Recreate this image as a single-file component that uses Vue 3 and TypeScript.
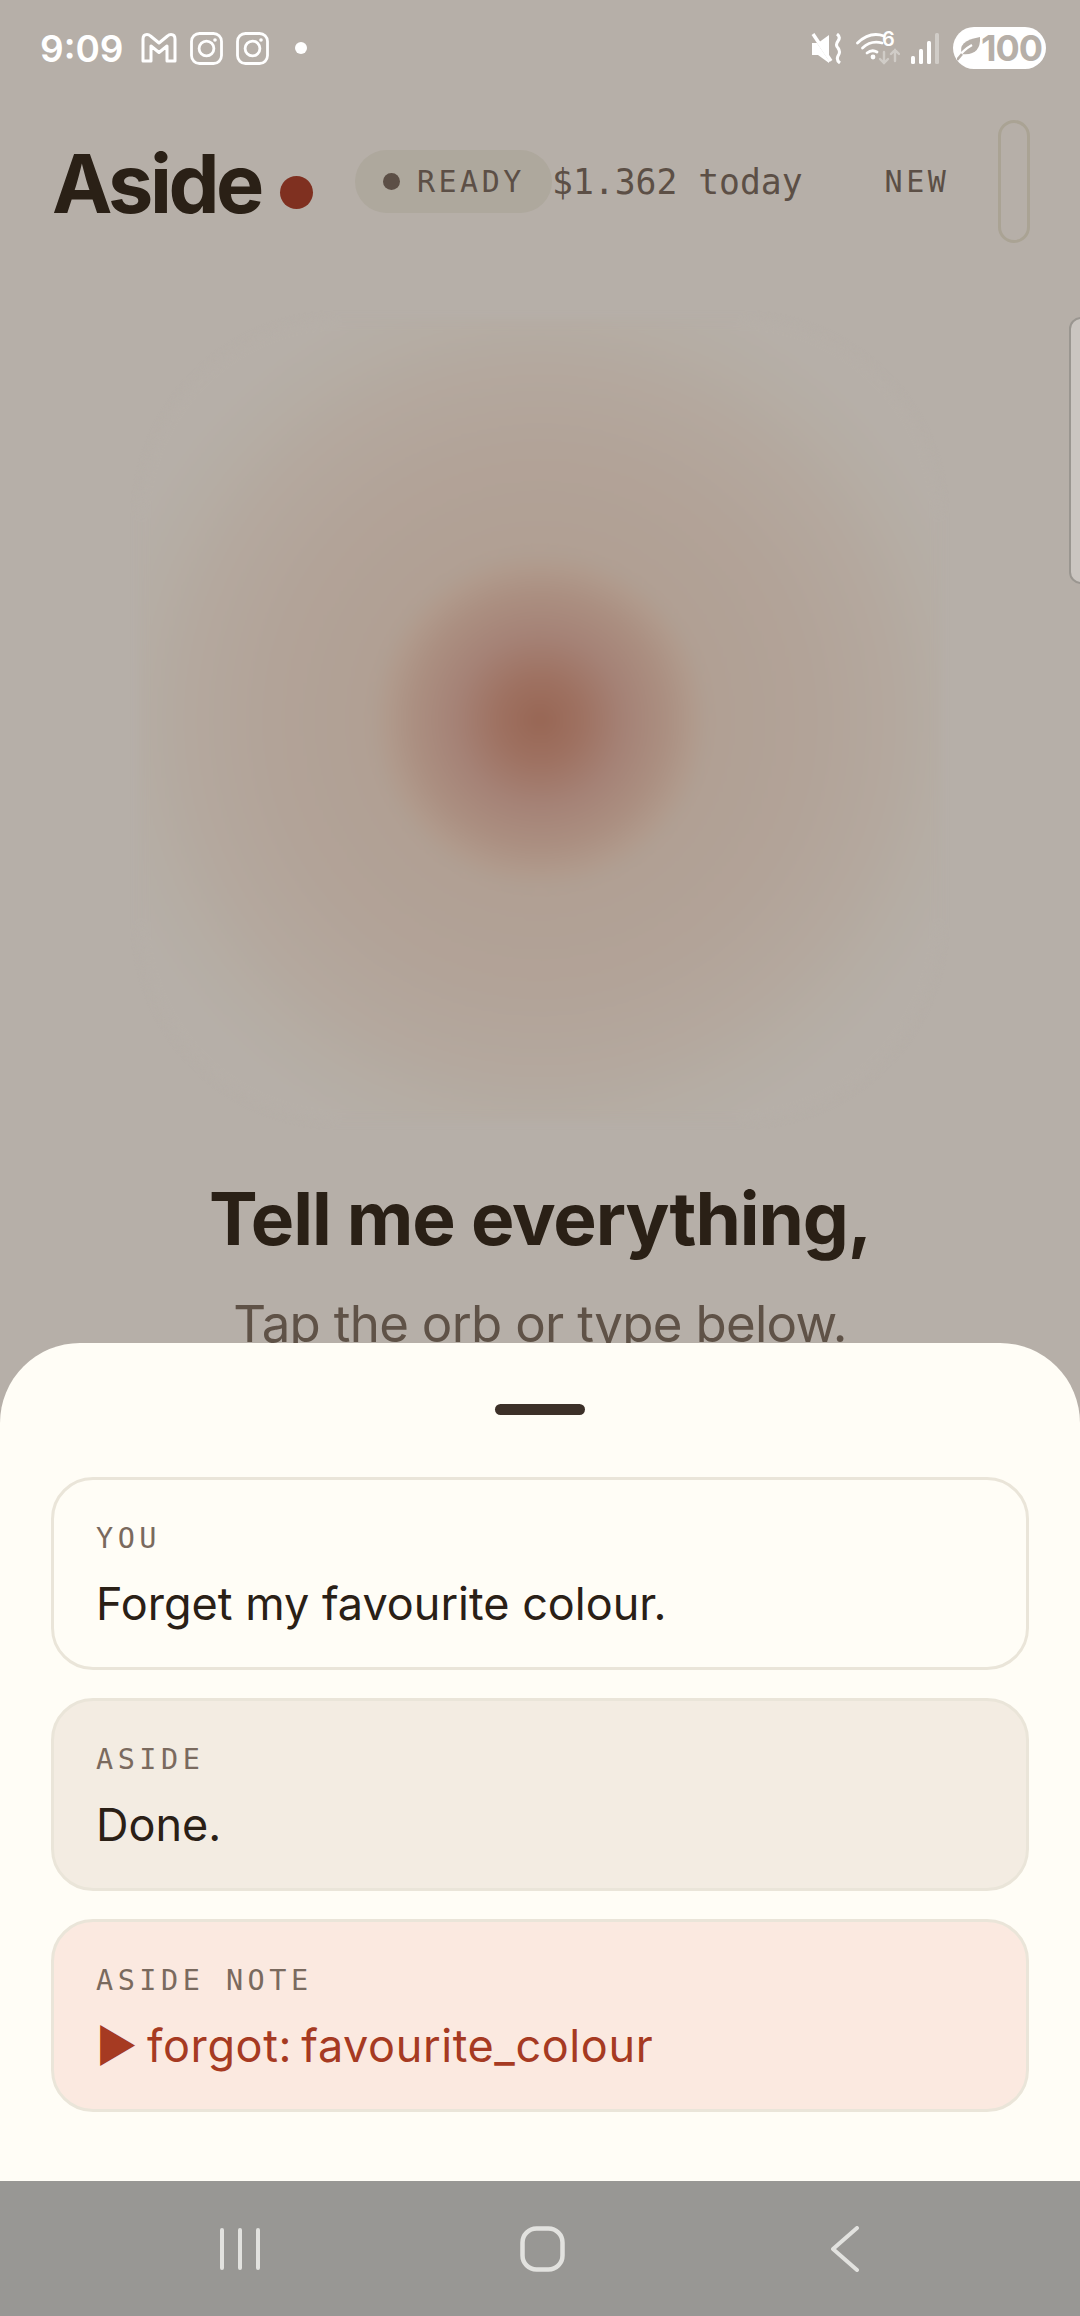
<template>
  <div class="phone">
    <div class="backdrop">
      <div class="status-bar">
        <span class="time">9:09</span>
        <svg class="ic-mail" width="36" height="30" viewBox="0 0 36 30" fill="none" stroke="#fff" stroke-width="3" stroke-linejoin="round">
          <path d="M2 6 Q2 1.5 6 1.5 Q8 1.5 9.5 3 L18 10 L26.5 3 Q28 1.5 30 1.5 Q34 1.5 34 6 V28 H26 V13 L18 19.5 L10 13 V28 H2 Z" />
        </svg>
        <svg v-for="n in 2" :key="n" class="ic-insta" width="33" height="33" viewBox="0 0 33 33" fill="none" stroke="#fff" stroke-width="2.8">
          <rect x="1.5" y="1.5" width="30" height="30" rx="8" />
          <circle cx="16.5" cy="16.5" r="7.4" />
          <circle cx="25" cy="8" r="1.8" fill="#fff" stroke="none" />
        </svg>
        <span class="note-dot"></span>
        <div class="status-right">
          <svg class="ic-mute" width="31" height="31" viewBox="0 0 31 31" fill="none">
            <path d="M1 10 H7 L18 2 V30 L7 22 H1 Z" fill="#fff" />
            <path d="M3.5 4 L21 30" stroke="#b6afa8" stroke-width="2.4" />
            <path d="M2 1 L20 28" stroke="#fff" stroke-width="3.4" />
            <path d="M26 1 Q30 4 27 8 Q24 12 27 15 Q30 19 27 23 Q25 27 29 30" stroke="#fff" stroke-width="3" />
          </svg>
          <svg class="ic-wifi" width="44" height="33" viewBox="0 0 44 33" fill="none" stroke-linecap="round">
            <path d="M1.5 11 Q14 -1 28 4" stroke="#fff" stroke-width="2.8" />
            <path d="M6.5 16 Q15 8 26 11" stroke="#fff" stroke-width="2.8" />
            <path d="M11 21 Q16 17 21 20" stroke="#fff" stroke-width="2.8" />
            <circle cx="17" cy="25" r="2.4" fill="#fff" />
            <path d="M28 20 V31 M24 27 L28 31 L32 27" stroke="#d0ccc7" stroke-width="2.4" />
            <path d="M39 29 V18 M35 22 L39 18 L43 22" stroke="#d0ccc7" stroke-width="2.4" />
          </svg>
          <span class="wifi-six">6</span>
          <svg class="ic-signal" width="28" height="31" viewBox="0 0 28 31" fill="#fff">
            <rect x="0" y="23" width="4" height="8" rx="1.5" />
            <rect x="8" y="16" width="4" height="15" rx="1.5" />
            <rect x="16" y="8" width="4" height="23" rx="1.5" />
            <rect x="24" y="0" width="4" height="31" rx="1.5" fill="#d0ccc7" />
          </svg>
          <div class="battery">
            <svg width="24" height="26" viewBox="0 0 24 26" fill="none">
              <path d="M5 19 Q0 6 23 2 Q24 21 5 19 Z" fill="#b6afa8" />
              <path d="M0 24 Q6 15 15 10" stroke="#fff" stroke-width="2.4" />
              <path d="M0 25 L5 19" stroke="#b6afa8" stroke-width="2.6" />
            </svg>
            <span>100</span>
          </div>
        </div>
      </div>

      <header class="top-row">
        <h1 class="logo">Aside</h1>
        <span class="logo-dot"></span>
        <div class="pill">
          <span class="pill-dot"></span>
          <span class="mono-label">READY</span>
        </div>
        <span class="cost">$1.362 today</span>
        <span class="mono-label new">NEW</span>
        <span class="capsule"></span>
      </header>

      <div class="orb">
        <div class="orb-core"></div>
      </div>

      <h2 class="headline">Tell me everything,</h2>
      <p class="subline">Tap the orb or type below.</p>
    </div>

    <section class="sheet">
      <div class="handle"></div>
      <div class="card-list">
        <article v-for="card in cards" :key="card.label" class="card" :class="card.kind">
          <div class="card-label">{{ card.label }}</div>
          <div class="card-text">{{ card.text }}</div>
        </article>
      </div>
    </section>

    <nav class="nav-bar">
      <svg width="40" height="44" viewBox="0 0 40 44" stroke="#e2e2df" stroke-width="4" stroke-linecap="round" fill="none">
        <path d="M2 3 V41 M20 3 V41 M38 3 V41" />
      </svg>
      <svg width="45" height="46" viewBox="0 0 45 46" stroke="#e2e2df" stroke-width="4.5" fill="none">
        <rect x="2.5" y="2.5" width="40" height="41" rx="14" />
      </svg>
      <svg width="28" height="46" viewBox="0 0 28 46" stroke="#e2e2df" stroke-width="4" stroke-linecap="round" stroke-linejoin="round" fill="none">
        <path d="M26 2 L2 23 L26 44" />
      </svg>
    </nav>

    <!-- peek of the side panel, sits over the page edge -->
    <div class="side-tab"></div>
  </div>
</template>

<script setup lang="ts">
const cards = [
  { label: "YOU", text: "Forget my favourite colour.", kind: "you" },
  { label: "ASIDE", text: "Done.", kind: "reply" },
  { label: "ASIDE NOTE", text: "▶ forgot: favourite_colour", kind: "note" },
]
</script>

<style>
html,
body {
  margin: 0;
  background: #b6afa8;
}
</style>

<style scoped>
.phone {
  position: relative;
  width: 1080px;
  height: 2316px;
  display: flex;
  flex-direction: column;
  overflow: hidden;
  background: #b6afa8;
  font-family: Inter, "Noto Sans", sans-serif;
}

.backdrop {
  height: 1343px;
  flex: none;
  overflow: hidden;
  display: flex;
  flex-direction: column;
}

.status-bar {
  height: 96px;
  flex: none;
  display: flex;
  align-items: center;
  padding: 0 34px 0 40px;
  color: #fff;
}

.time {
  font-size: 37px;
  font-weight: 600;
  width: 101px;
}

.ic-insta {
  margin-left: 13px;
}

.note-dot {
  width: 12px;
  height: 12px;
  border-radius: 50%;
  background: #fff;
  margin-left: 26px;
}

.status-right {
  margin-left: auto;
  display: flex;
  align-items: center;
}

.ic-wifi {
  margin-left: 14px;
}

.wifi-six {
  font-size: 20px;
  font-weight: 600;
  color: #fff;
  margin: -19px 0 0 -18px;
  width: 18px;
}

.ic-signal {
  margin-left: 11px;
}

.battery {
  margin-left: 14px;
  width: 93px;
  height: 42px;
  box-sizing: border-box;
  padding-left: 4px;
  border-radius: 21px;
  background: #fff;
  display: flex;
  align-items: center;
  color: #b6afa8;
  font-size: 36px;
  font-weight: 700;
  letter-spacing: -1px;
}

.top-row {
  height: 123px;
  margin-top: 24px;
  padding: 0 50px 0 52px;
  flex: none;
  display: flex;
  align-items: center;
}

.logo {
  margin: 0;
  font-size: 81px;
  font-weight: 700;
  letter-spacing: -3.5px;
  color: #2a2016;
  line-height: 1;
  width: 228px;
  position: relative;
  top: 3px;
}

.logo-dot {
  width: 33px;
  height: 33px;
  flex: none;
  border-radius: 50%;
  background: #7f3020;
  margin-top: 22px;
}

.pill {
  margin-left: 42px;
  width: 197px;
  height: 63px;
  box-sizing: border-box;
  padding-left: 28px;
  flex: none;
  display: flex;
  align-items: center;
  gap: 17px;
  border-radius: 32px;
  background: #aea89d;
}

.pill-dot {
  width: 17px;
  height: 17px;
  flex: none;
  border-radius: 50%;
  background: #5c4f46;
}

.mono-label {
  font-family: "DejaVu Sans Mono", "Liberation Mono", monospace;
  font-size: 30px;
  letter-spacing: 3.5px;
  color: #5c4f46;
}

.cost {
  font-family: "DejaVu Sans Mono", "Liberation Mono", monospace;
  font-size: 34.7px;
  color: #5c4f46;
  white-space: nowrap;
}

.new {
  margin-left: 82px;
}

.capsule {
  margin-left: auto;
  width: 32px;
  height: 123px;
  box-sizing: border-box;
  flex: none;
  border: 3px solid #aaa394;
  border-radius: 16px;
}

.orb {
  align-self: center;
  margin-top: 77px;
  width: 800px;
  height: 800px;
  flex: none;
  display: flex;
  align-items: center;
  justify-content: center;
  border-radius: 200px;
  background: radial-gradient(circle 450px at center, #b0a093 0, #b1a094 40%, #b2a398 60%, #b4a89e 78%, #b5ada4 90%, #b6afa8 100%);
  filter: blur(4px);
}

.orb-core {
  width: 340px;
  height: 340px;
  border-radius: 50%;
  filter: blur(4px);
  background: radial-gradient(circle closest-side at center, #986654 0, #9e7161 24%, #a58276 50%, #ab8f81 74%, #b09a8c 90%, rgba(176, 156, 142, 0) 100%);
}

.headline {
  margin: 54px 0 0;
  text-align: center;
  font-size: 73px;
  font-weight: 700;
  letter-spacing: -1.1px;
  color: #2a2016;
  line-height: 90px;
  flex: none;
}

.subline {
  margin: 28px 0 0;
  text-align: center;
  font-size: 51px;
  font-weight: 400;
  letter-spacing: -0.7px;
  color: #5f5247;
  line-height: 64px;
  flex: none;
}

.sheet {
  flex: 1;
  box-sizing: border-box;
  padding: 61px 51px 0;
  border-radius: 80px 80px 0 0;
  background: #fffdf6;
}

.handle {
  width: 90px;
  height: 11px;
  margin: 0 auto 62px;
  border-radius: 6px;
  background: #3c3028;
}

.card-list {
  display: flex;
  flex-direction: column;
  gap: 28px;
}

.card {
  height: 193px;
  box-sizing: border-box;
  padding: 42px 42px 0;
  border: 3px solid #eae5d9;
  border-radius: 42px;
}

.card.reply {
  background: #f3ece2;
}

.card.note {
  background: #fbe9e0;
}

.card-label {
  font-family: "DejaVu Sans Mono", "Liberation Mono", monospace;
  font-size: 28.5px;
  line-height: 34px;
  letter-spacing: 4.5px;
  color: #7a6a5e;
}

.card-text {
  margin-top: 18px;
  font-size: 45px;
  line-height: 60px;
  color: #2a2016;
}

.card.note .card-text {
  color: #a63a22;
  letter-spacing: 0.6px;
  word-spacing: -4px;
}

.nav-bar {
  height: 135px;
  flex: none;
  box-sizing: border-box;
  padding-left: 220px;
  display: grid;
  grid-template-columns: 300px 311px 1fr;
  align-items: center;
  background: #989794;
}

.side-tab {
  position: absolute;
  top: 317px;
  right: -14px;
  width: 25px;
  height: 267px;
  box-sizing: border-box;
  border: 2px solid #9a9690;
  border-radius: 12px;
  background: #cac5c0;
}
</style>
